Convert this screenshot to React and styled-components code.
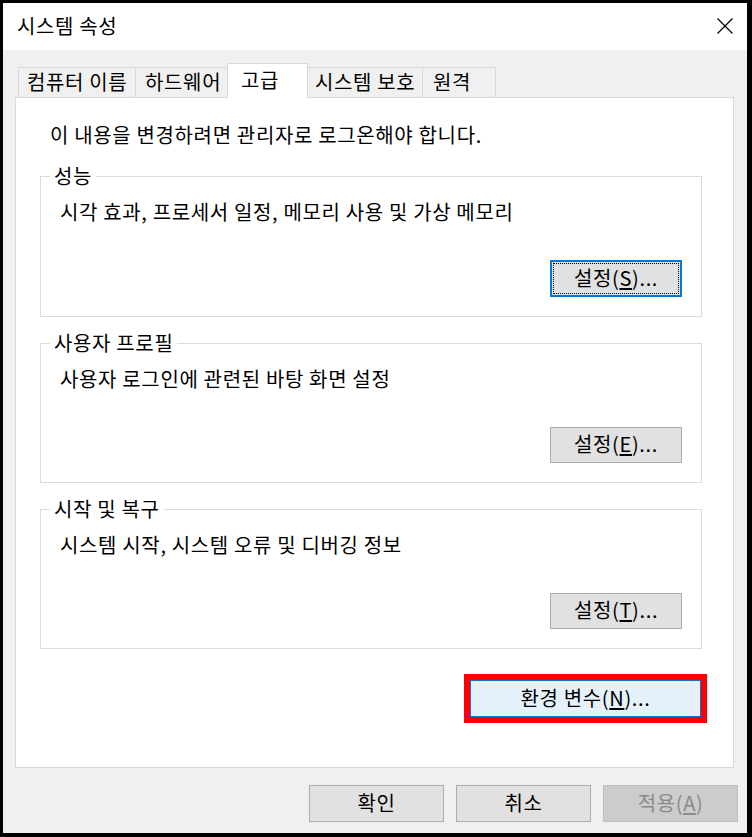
import React from "react";
import styled, { createGlobalStyle } from "styled-components";

const GlobalStyle = createGlobalStyle`
  html, body {
    margin: 0;
    padding: 0;
    background: #000;
  }
  body {
    font-family: "Noto Sans CJK KR", "Noto Sans", sans-serif;
    color: #000;
  }
`;

const Window = styled.div`
  box-sizing: border-box;
  width: 752px;
  height: 837px;
  display: flex;
  flex-direction: column;
  border-style: solid;
  border-color: #000;
  border-width: 3px 5px 4px 3px;
  background: #f0f0f0;
  font-size: 20px;
  letter-spacing: 0.65px;
`;

const TitleBar = styled.div`
  height: 47px;
  flex: none;
  display: flex;
  align-items: center;
  justify-content: space-between;
  padding: 0 14px 0 14px;
  background: #fff;
`;

const Title = styled.span`
  line-height: 22px;
  padding-bottom: 1px;
`;

const CloseButton = styled.span`
  display: flex;
  align-items: center;
  justify-content: center;
  width: 16px;
  height: 16px;
  margin-top: -2px;
`;

const Body = styled.div`
  flex: 1;
  display: flex;
  flex-direction: column;
  padding: 13px 13px 0 12px;
  min-height: 0;
`;

const TabStrip = styled.div`
  height: 34px;
  flex: none;
  display: flex;
  align-items: flex-end;
  padding-left: 3px;
`;

const Tab = styled.div`
  position: relative;
  box-sizing: border-box;
  width: ${({ $w }) => $w}px;
  height: ${({ $active }) => ($active ? 35 : 30)}px;
  margin-bottom: ${({ $active }) => ($active ? -1 : 0)}px;
  margin-left: -1px;
  padding-left: ${({ $pad }) => $pad}px;
  padding-bottom: ${({ $active }) => ($active ? 3 : 1)}px;
  display: flex;
  align-items: center;
  border: 1px solid #d9d9d9;
  border-bottom: none;
  background: ${({ $active }) => ($active ? "#fff" : "#f0f0f0")};
  z-index: ${({ $active }) => ($active ? 2 : 1)};
  line-height: 22px;
  white-space: nowrap;

  &:first-child {
    margin-left: 0;
  }
`;

const Panel = styled.div`
  flex: 1;
  display: flex;
  flex-direction: column;
  gap: 15px;
  padding: 0 31px 0 24px;
  background: #fff;
  border: 1px solid #d9d9d9;
`;

const Notice = styled.p`
  margin: 26px 0 4px 10px;
  line-height: 22px;
`;

const Group = styled.fieldset`
  margin: 0;
  padding: 14px 19px 19px 19px;
  border: 1px solid #dcdcdc;
  min-width: 0;
  display: flex;
  flex-direction: column;
`;

const Legend = styled.legend`
  margin-left: -10px;
  padding: 0 4px;
  line-height: 22px;
`;

const Description = styled.div`
  line-height: 22px;
`;

const ButtonRow = styled.div`
  display: flex;
  justify-content: flex-end;
  margin-top: ${({ $top }) => $top || 0}px;
  margin-right: ${({ $right }) => $right || 0}px;
`;

const Button = styled.button`
  box-sizing: border-box;
  width: ${({ $w }) => $w}px;
  height: ${({ $h }) => $h || 36}px;
  padding: 0 0 2px;
  font-family: inherit;
  font-size: 20px;
  letter-spacing: 0.65px;
  line-height: 22px;
  color: ${({ $variant }) => ($variant === "disabled" ? "#8a8a8a" : "#000")};
  background: ${({ $variant }) =>
    $variant === "hot" ? "#e5f1fb" : $variant === "disabled" ? "#cccccc" : "#e1e1e1"};
  border: ${({ $variant }) =>
    $variant === "focus"
      ? "2px solid #0078d7"
      : $variant === "hot"
      ? "1px solid #0078d7"
      : $variant === "disabled"
      ? "1px solid #bfbfbf"
      : "1px solid #adadad"};
  outline: ${({ $variant }) => ($variant === "focus" ? "1px dotted #000" : "none")};
  outline-offset: -4px;
  cursor: default;

  u {
    text-underline-offset: 2px;
  }
`;

const Highlight = styled.span`
  display: inline-flex;
  border: 6px solid #ff0000;
`;

const Footer = styled.div`
  flex: none;
  display: flex;
  justify-content: flex-end;
  gap: 12px;
  padding: 17px 9px 11px 0;
`;

const tabs = [
  { label: "컴퓨터 이름", w: 118, pad: 8 },
  { label: "하드웨어", w: 93, pad: 9 },
  { label: "고급", w: 81, pad: 13, active: true },
  { label: "시스템 보호", w: 116, pad: 7 },
  { label: "원격", w: 74, pad: 10 },
];

const groups = [
  { title: "성능", text: "시각 효과, 프로세서 일정, 메모리 사용 및 가상 메모리", key: "S", focus: true },
  { title: "사용자 프로필", text: "사용자 로그인에 관련된 바탕 화면 설정", key: "E" },
  { title: "시작 및 복구", text: "시스템 시작, 시스템 오류 및 디버깅 정보", key: "T" },
];

const CloseIcon = () => (
  <svg width="16" height="16" viewBox="0 0 16 16">
    <path d="M0.5 0.5 L15.5 15.5 M15.5 0.5 L0.5 15.5" stroke="#000" strokeWidth="1.2" fill="none" />
  </svg>
);

const App = () => {
  return (
    <>
      <GlobalStyle />
      <Window>
        <TitleBar>
          <Title>시스템 속성</Title>
          <CloseButton>
            <CloseIcon />
          </CloseButton>
        </TitleBar>
        <Body>
          <TabStrip>
            {tabs.map((t) => (
              <Tab key={t.label} $w={t.w} $pad={t.pad} $active={t.active}>
                {t.label}
              </Tab>
            ))}
          </TabStrip>
          <Panel>
            <Notice>이 내용을 변경하려면 관리자로 로그온해야 합니다.</Notice>
            {groups.map((g) => (
              <Group key={g.title}>
                <Legend>{g.title}</Legend>
                <Description>{g.text}</Description>
                <ButtonRow $top={37}>
                  <Button $w={132} $h={g.focus ? 37 : 36} $variant={g.focus ? "focus" : undefined}>
                    설정(<u>{g.key}</u>)...
                  </Button>
                </ButtonRow>
              </Group>
            ))}
            <ButtonRow $top={10} $right={-5}>
              <Highlight>
                <Button $w={231} $h={37} $variant="hot">
                  환경 변수(<u>N</u>)...
                </Button>
              </Highlight>
            </ButtonRow>
          </Panel>
        </Body>
        <Footer>
          <Button $w={135} $h={37}>확인</Button>
          <Button $w={135} $h={37}>취소</Button>
          <Button $w={135} $h={37} $variant="disabled">
            적용(<u>A</u>)
          </Button>
        </Footer>
      </Window>
    </>
  );
};

export default App;
